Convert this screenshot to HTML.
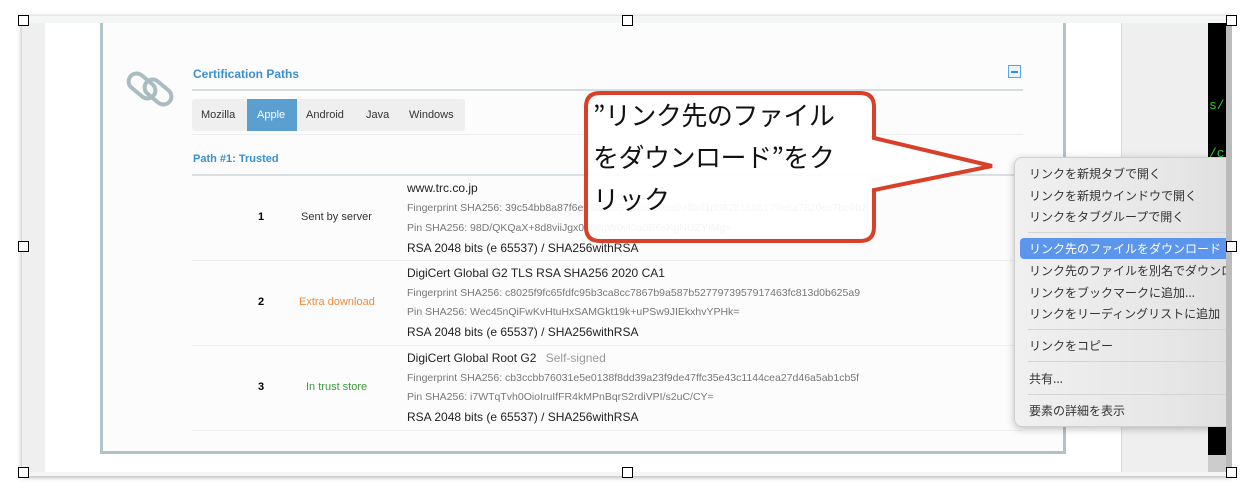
<!DOCTYPE html>
<html><head><meta charset="utf-8"><style>
*{margin:0;padding:0;box-sizing:border-box}
body{width:1250px;height:502px;background:#fff;position:relative;overflow:hidden;font-family:"Liberation Sans","Noto Sans CJK JP",sans-serif}
.a{position:absolute}
.h{position:absolute;width:11px;height:11px;border:1px solid #000;background:#fff}
.t{position:absolute;white-space:nowrap}
.fp{font-size:10.5px;color:#777}
.nm{font-size:12px;color:#222}
.mi{position:absolute;left:1029px;font-size:12px;color:#333;white-space:nowrap;font-family:"Noto Sans CJK JP",sans-serif}
.sep{position:absolute;left:1028px;width:200px;height:1px;background:#d4d4d4}
</style></head><body>
<div class="a" style="left:22px;top:16px;width:1210px;height:460px;background:#f4f6f6;box-shadow:0 1px 5px rgba(0,0,0,.35)"></div>
<div class="a" style="left:22px;top:23px;width:23px;height:449px;background:#efefef"></div>
<div class="a" style="left:45px;top:23px;width:1076px;height:449px;background:#fff"></div>
<div class="a" style="left:100px;top:23px;width:966px;height:431px;background:#fcfcfc;border-left:3px solid #b0c4c8;border-right:3px solid #b0c4c8;border-bottom:3px solid #b0c4c8"></div>
<div class="a" style="left:1121px;top:23px;width:87px;height:449px;background:#efefef;border-left:1px solid #d0dde2"></div>
<div class="a" style="left:1208px;top:23px;width:20px;height:432px;background:#000"></div>
<div class="t" style="left:1209px;top:98px;color:#3c3;font-family:'Liberation Mono',monospace;font-size:13px">s/</div>
<div class="t" style="left:1209px;top:146px;color:#3c3;font-family:'Liberation Mono',monospace;font-size:13px">/c</div>
<div class="a" style="left:1208px;top:455px;width:20px;height:17px;background:#ccc"></div>
<svg class="a" style="left:125px;top:68px" width="52" height="42"><g fill="none" stroke="#a9bcc2" stroke-width="4"><rect x="2" y="10" width="30" height="16" rx="8" transform="rotate(40 17 18)"/><rect x="18" y="16" width="30" height="16" rx="8" transform="rotate(40 33 24)"/></g></svg>
<div class="t" style="left:193px;top:67px;font-size:12px;font-weight:bold;color:#3a8fd0">Certification Paths</div>
<div class="a" style="left:1008px;top:65px;width:13px;height:13px;border:1px solid #5aa6e0;background:#eaf3fb"><div class="a" style="left:2px;top:5px;width:7px;height:2px;background:#3a8fd0"></div></div>
<div class="a" style="left:192px;top:89px;width:831px;height:2px;background:#d3dde0"></div>
<div class="a" style="left:192px;top:99px;width:273px;height:32px;background:#efefef;border-radius:3px"></div>
<div class="a" style="left:247px;top:99px;width:50px;height:32px;background:#5a9fcf"></div>
<div class="t" style="left:201px;top:109px;font-size:11px;color:#333">Mozilla</div>
<div class="t" style="left:257px;top:109px;font-size:11px;color:#fff">Apple</div>
<div class="t" style="left:306px;top:109px;font-size:11px;color:#333">Android</div>
<div class="t" style="left:366px;top:109px;font-size:11px;color:#333">Java</div>
<div class="t" style="left:409px;top:109px;font-size:11px;color:#333">Windows</div>
<div class="a" style="left:192px;top:134px;width:831px;height:1px;background:#eceff0"></div>
<div class="t" style="left:193px;top:153px;font-size:11px;font-weight:bold;color:#3a8fd0">Path #1: Trusted</div>
<div class="a" style="left:192px;top:174px;width:831px;height:2px;background:#d8e0e3"></div>
<div class="a" style="left:192px;top:260px;width:831px;height:1px;background:#eceff0"></div>
<div class="a" style="left:192px;top:345px;width:831px;height:1px;background:#eceff0"></div>
<div class="a" style="left:192px;top:430px;width:831px;height:1px;background:#eceff0"></div>
<div class="t" style="left:258px;top:211px;font-size:11px;font-weight:bold">1</div>
<div class="t" style="left:301px;top:211px;font-size:11px;color:#333">Sent by server</div>
<div class="t nm" style="left:407px;top:181px">www.trc.co.jp</div>
<div class="t fp" style="left:407px;top:202px">Fingerprint SHA256: 39c54bb8a87f6e96d2865324c890ca9affb41d68251886179e6a7820ec7bc9b7</div>
<div class="t fp" style="left:407px;top:222px">Pin SHA256: 98D/QKQaX+8d8viiJgx01cdgW0yI0a0E6sKgNUZYIMg=</div>
<div class="t nm" style="left:407px;top:241px">RSA 2048 bits (e 65537) / SHA256withRSA</div>
<div class="t" style="left:258px;top:296px;font-size:11px;font-weight:bold">2</div>
<div class="t" style="left:299px;top:296px;font-size:11px;color:#f08a3a">Extra download</div>
<div class="t nm" style="left:407px;top:266px">DigiCert Global G2 TLS RSA SHA256 2020 CA1</div>
<div class="t fp" style="left:407px;top:287px">Fingerprint SHA256: c8025f9fc65fdfc95b3ca8cc7867b9a587b5277973957917463fc813d0b625a9</div>
<div class="t fp" style="left:407px;top:306px">Pin SHA256: Wec45nQiFwKvHtuHxSAMGkt19k+uPSw9JIEkxhvYPHk=</div>
<div class="t nm" style="left:407px;top:325px">RSA 2048 bits (e 65537) / SHA256withRSA</div>
<div class="t" style="left:258px;top:381px;font-size:11px;font-weight:bold">3</div>
<div class="t" style="left:306px;top:381px;font-size:11px;color:#3a9a3a">In trust store</div>
<div class="t nm" style="left:407px;top:351px">DigiCert Global Root G2 <span style="color:#999;margin-left:6px">Self-signed</span></div>
<div class="t fp" style="left:407px;top:372px">Fingerprint SHA256: cb3ccbb76031e5e0138f8dd39a23f9de47ffc35e43c1144cea27d46a5ab1cb5f</div>
<div class="t fp" style="left:407px;top:391px">Pin SHA256: i7WTqTvh0OioIruIfFR4kMPnBqrS2rdiVPI/s2uC/CY=</div>
<div class="t nm" style="left:407px;top:410px">RSA 2048 bits (e 65537) / SHA256withRSA</div>
<svg class="a" style="left:0;top:0" width="1250" height="502">
<path d="M600 93 H860 Q874 93 874 107 V138 L992 166 L874 190 V227 Q874 241 860 241 H600 Q586 241 586 227 V107 Q586 93 600 93 Z" fill="rgba(255,255,255,0.93)" stroke="#d9402a" stroke-width="4" stroke-linejoin="miter"/>
</svg>
<div class="t" style="left:593px;top:94px;font-size:26px;line-height:42px;color:#111;font-family:'Noto Sans CJK JP',sans-serif;letter-spacing:-0.5px">”リンク先のファイル<br>をダウンロード”をク<br>リック</div>
<div class="a" style="left:1014px;top:157px;width:230px;height:270px;border-radius:8px;background:linear-gradient(90deg,#f0f0f0,#e6e6e6 70%,#dedede);box-shadow:0 2px 8px rgba(0,0,0,.25);border:1px solid #cfcfcf"></div>
<div class="mi" style="top:165px">リンクを新規タブで開く</div>
<div class="mi" style="top:187px">リンクを新規ウインドウで開く</div>
<div class="mi" style="top:208px">リンクをタブグループで開く</div>
<div class="sep" style="top:232px"></div>
<div class="a" style="left:1020px;top:238px;width:212px;height:21px;background:#5b96ec;border-radius:4px"></div>
<div class="mi" style="top:240px;color:#fff">リンク先のファイルをダウンロード</div>
<div class="mi" style="top:262px">リンク先のファイルを別名でダウンロード</div>
<div class="mi" style="top:284px">リンクをブックマークに追加...</div>
<div class="mi" style="top:305px">リンクをリーディングリストに追加</div>
<div class="sep" style="top:329px"></div>
<div class="mi" style="top:337px">リンクをコピー</div>
<div class="sep" style="top:361px"></div>
<div class="mi" style="top:370px">共有...</div>
<div class="sep" style="top:394px"></div>
<div class="mi" style="top:402px">要素の詳細を表示</div>
<div class="a" style="left:1232px;top:0;width:18px;height:502px;background:#fff"></div>
<div class="a" style="left:1226px;top:23px;width:6px;height:449px;background:#bbb"></div>
<div class="h" style="left:18px;top:15px"></div><div class="h" style="left:622px;top:15px"></div><div class="h" style="left:1226px;top:15px"></div>
<div class="h" style="left:18px;top:241px"></div><div class="h" style="left:1226px;top:241px"></div>
<div class="h" style="left:18px;top:467px"></div><div class="h" style="left:622px;top:467px"></div><div class="h" style="left:1226px;top:467px"></div>
</body></html>
